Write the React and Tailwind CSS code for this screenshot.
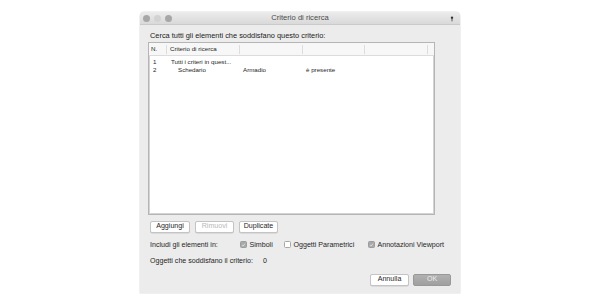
import React from "react";

const font = { fontFamily: '"Liberation Sans", Arial, sans-serif' };

const Check = ({ checked }) => (
  <span
    className={
      "w-[7px] h-[7px] rounded-[1.5px] flex items-center justify-center border " +
      (checked ? "bg-[#a9a9a9] border-[#9c9c9c]" : "bg-white border-[#a6a6a6]")
    }
  >
    {checked && (
      <svg viewBox="0 0 8 8" className="w-[6px] h-[6px]">
        <path d="M1.6 4.2 L3.2 5.8 L6.4 2" fill="none" stroke="#f2f2f2" strokeWidth="1.1" />
      </svg>
    )}
  </span>
);

const Btn = ({ children, w, disabled }) => (
  <button
    className={
      "h-[12px] rounded-[2px] bg-white border border-[#c4c4c4] shadow-[0_0.5px_0.5px_rgba(0,0,0,0.15)] text-[7.1px] leading-none flex items-center justify-center " +
      w +
      (disabled ? " text-[#b8b8b8]" : " text-[#1f1f1f]")
    }
  >
    {children}
  </button>
);

export default function App() {
  return (
    <div className="w-[600px] h-[302px] bg-white flex justify-center pt-[12px]" style={font}>
      <div className="w-[320px] h-[281px] bg-[#ececec] rounded-t-[4px] flex flex-col shadow-[0_0_0_0.5px_rgba(0,0,0,0.12)]">
        {/* title bar */}
        <div className="h-[13px] bg-gradient-to-b from-[#ececec] to-[#d9d9d9] border-b border-[#cacaca] rounded-t-[4px] flex items-center px-[3px] relative">
          <div className="flex gap-[4.5px] items-center absolute left-[3px] top-[3px]">
            <span className="w-[6.5px] h-[6.5px] rounded-full bg-[#a7a7a7]" />
            <span className="w-[6.5px] h-[6.5px] rounded-full bg-[#d2d2d2]" />
            <span className="w-[6.5px] h-[6.5px] rounded-full bg-[#a7a7a7]" />
          </div>
          <div className="flex-1 text-center text-[7.6px] text-[#4a4a4a]">Criterio di ricerca</div>
          <svg viewBox="0 0 6 8" className="w-[4px] h-[6px] absolute right-[6px] top-[3.5px]">
            <circle cx="3" cy="2" r="1.8" fill="#333" />
            <rect x="2.4" y="3" width="1.2" height="4.5" fill="#333" />
          </svg>
        </div>

        <div className="flex flex-col px-[8px]">
          <div className="pl-[2px] mt-[6px] h-[10px] text-[7.4px] leading-[10px] text-[#1a1a1a]">
            Cerca tutti gli elementi che soddisfano questo criterio:
          </div>

          {/* table */}
          <div className="mt-[1px] w-[287px] h-[173px] bg-white border border-[#b5b5b5] shadow-[inset_0_0_0_1px_#d4d4d4] text-[6.2px] text-[#262626]">
            <div className="h-[13px] grid grid-cols-[18px_73px_63px_62px_63px_1fr] bg-[#f7f7f7] border-b border-[#dcdcdc] items-center">
              <div className="pl-[2px] border-r border-[#dddddd] h-[9px] flex items-center">N.</div>
              <div className="pl-[3px] border-r border-[#dddddd] h-[9px] flex items-center">Criterio di ricerca</div>
              <div className="border-r border-[#dddddd] h-[9px]" />
              <div className="border-r border-[#dddddd] h-[9px]" />
              <div className="border-r border-[#dddddd] h-[9px]" />
              <div />
            </div>
            <div className="mt-[1px] h-[8px] grid grid-cols-[18px_73px_63px_62px_63px_1fr] items-center">
              <div className="pl-[4px]">1</div>
              <div className="pl-[4px] whitespace-nowrap">Tutti i criteri in quest...</div>
            </div>
            <div className="h-[8px] grid grid-cols-[18px_73px_63px_62px_63px_1fr] items-center">
              <div className="pl-[4px]">2</div>
              <div className="pl-[11px]">Schedario</div>
              <div className="pl-[3px]">Armadio</div>
              <div className="pl-[3px]">è presente</div>
            </div>
          </div>

          {/* buttons */}
          <div className="mt-[6px] pl-[2px] flex gap-[5px]">
            <Btn w="w-[40px]">Aggiungi</Btn>
            <Btn w="w-[39px]" disabled>
              Rimuovi
            </Btn>
            <Btn w="w-[39px]">Duplicate</Btn>
          </div>

          {/* include row */}
          <div className="mt-[6px] pl-[2px] h-[12px] flex items-center text-[7.1px] text-[#1f1f1f]">
            <span className="w-[90px]">Includi gli elementi in:</span>
            <span className="w-[44px] flex items-center gap-[2.5px]">
              <Check checked />
              Simboli
            </span>
            <span className="w-[84px] flex items-center gap-[2.5px]">
              <Check />
              Oggetti Parametrici
            </span>
            <span className="flex items-center gap-[2.5px]">
              <Check checked />
              Annotazioni Viewport
            </span>
          </div>

          <div className="mt-[5px] pl-[2px] h-[10px] flex items-center text-[7.1px] text-[#1f1f1f]">
            <span className="w-[113px]">Oggetti che soddisfano il criterio:</span>
            <span>0</span>
          </div>

          {/* footer */}
          <div className="mt-[8px] flex justify-end gap-[4px] pr-[1px]">
            <Btn w="w-[39px]">Annulla</Btn>
            <button className="w-[38px] h-[12px] rounded-[2px] bg-gradient-to-b from-[#b1b1b1] to-[#9f9f9f] border border-[#989898] text-[7.1px] leading-none text-[#ececec] flex items-center justify-center">
              OK
            </button>
          </div>
        </div>
      </div>
    </div>
  );
}
